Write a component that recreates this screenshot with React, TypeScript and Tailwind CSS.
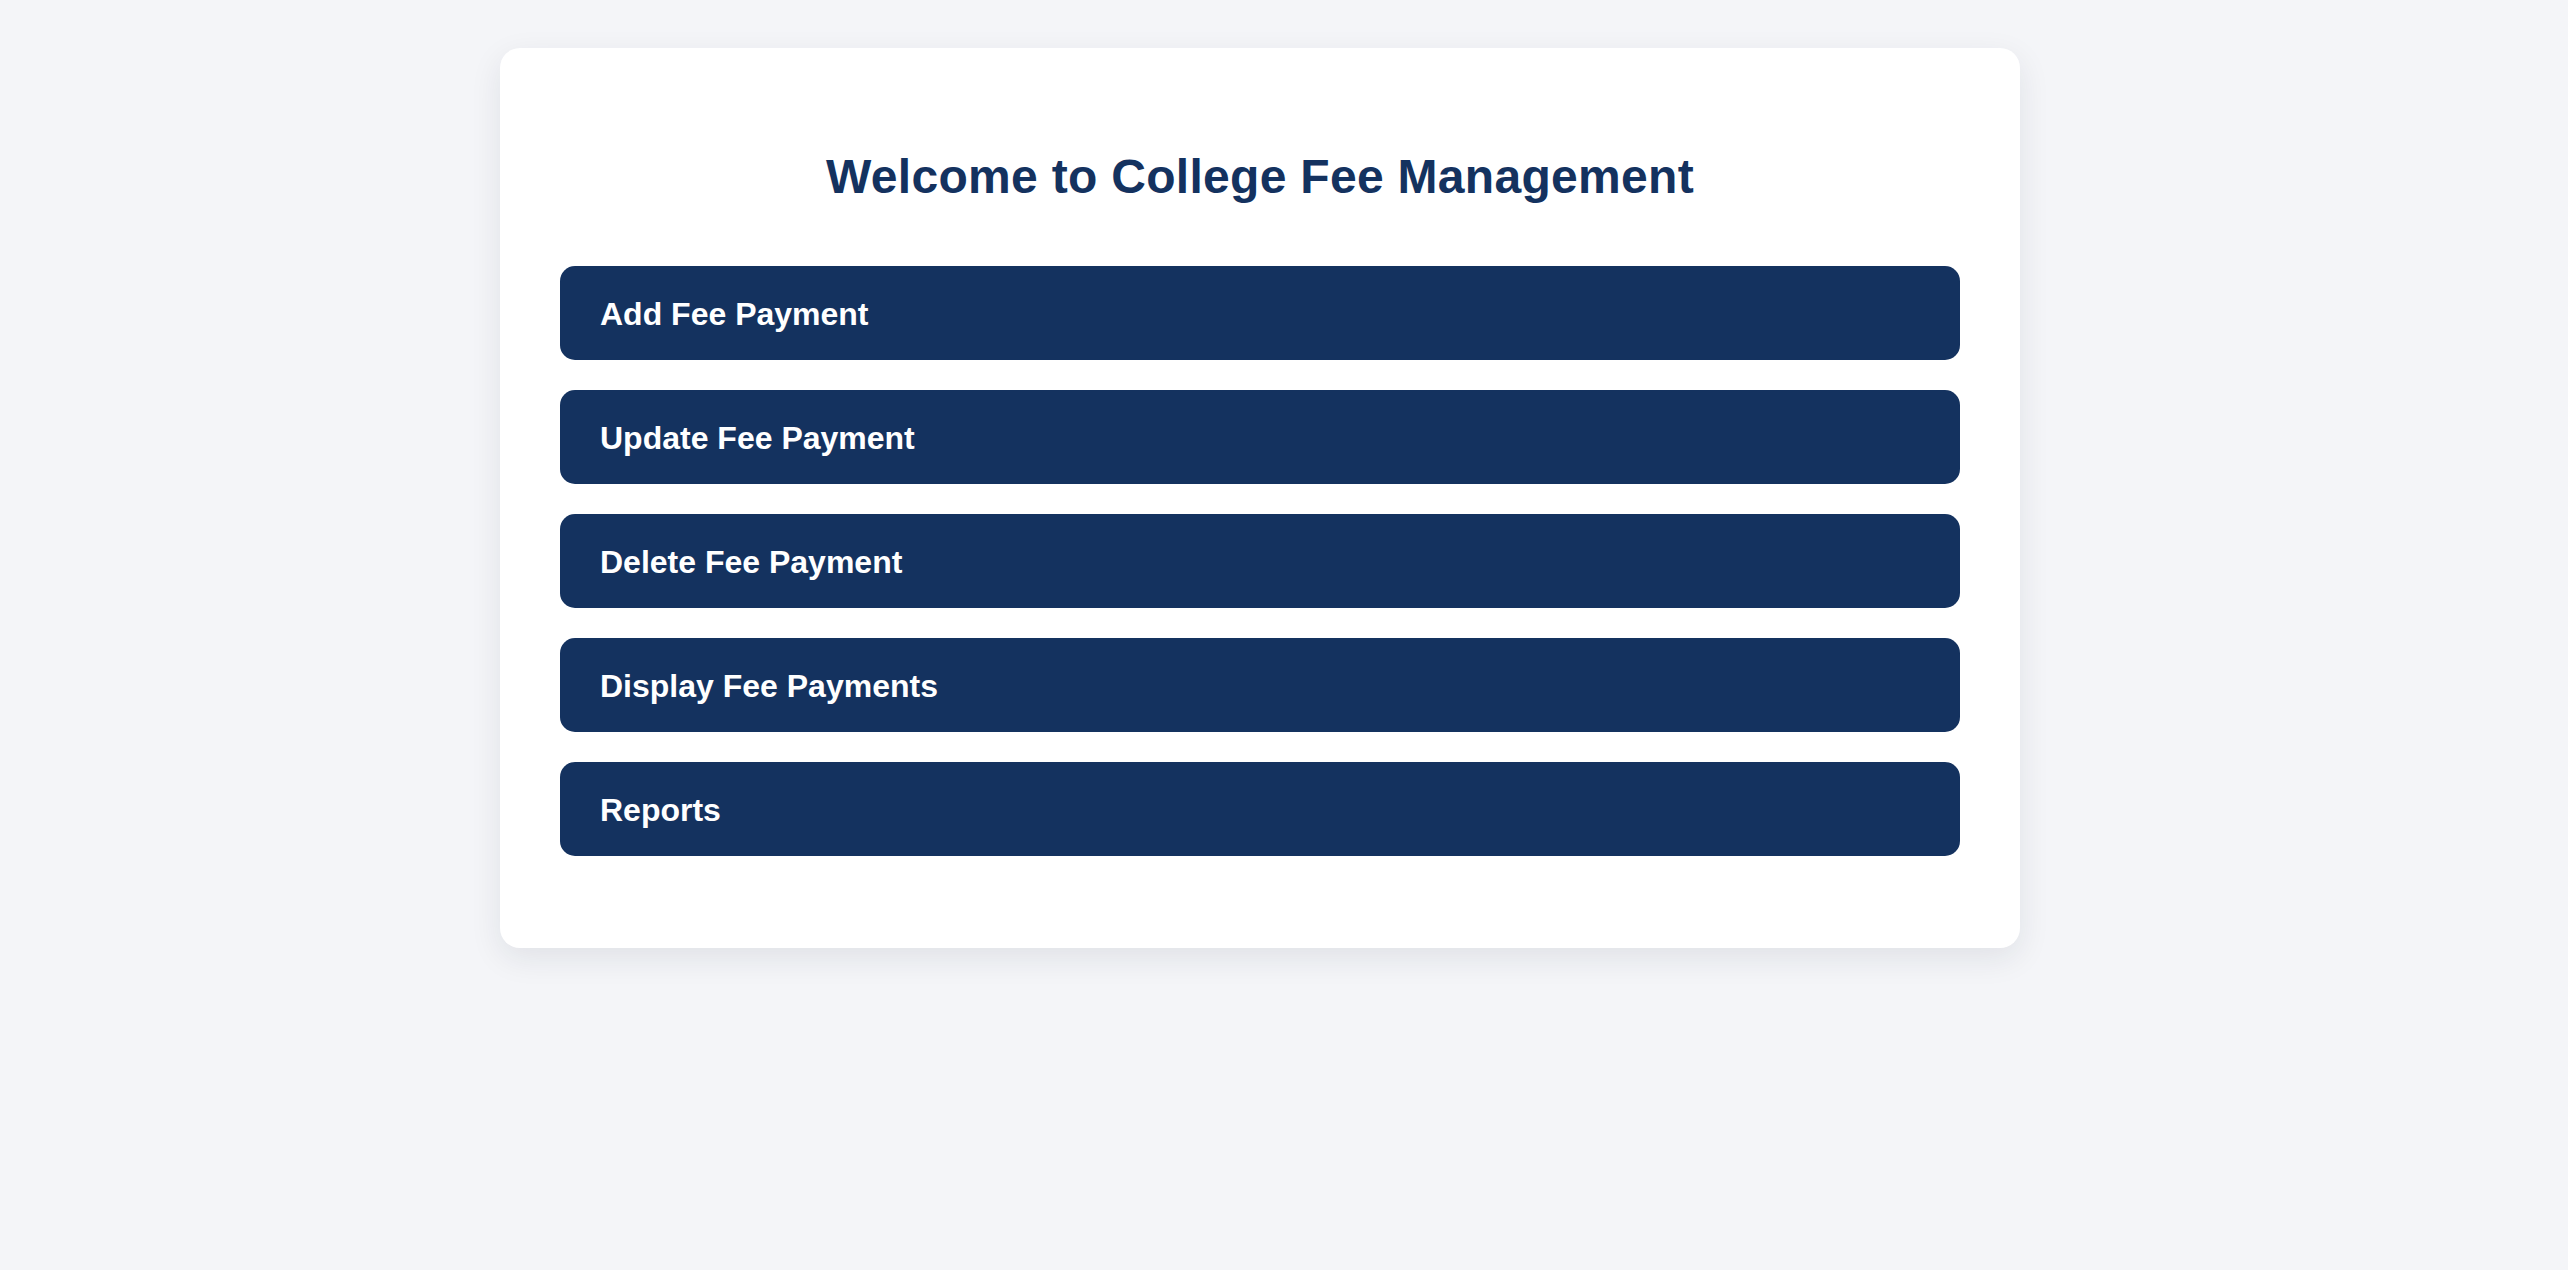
const menuItems = [
  'Add Fee Payment',
  'Update Fee Payment',
  'Delete Fee Payment',
  'Display Fee Payments',
  'Reports',
];

export default function App() {
  return (
    <div
      className="min-h-[1270px] w-full bg-[#f4f5f8] pt-[48px]"
      style={{ fontFamily: '"Liberation Sans", Arial, Helvetica, sans-serif' }}
    >
      <div className="ml-[500px] w-[1520px] rounded-[20px] bg-white px-[60px] pt-[100px] pb-[92px] shadow-[0_10px_32px_rgba(20,30,60,0.09)]">
        <h1 className="text-center text-[48px] leading-[58px] font-bold tracking-[0.3px] text-[#14325f]">
          Welcome to College Fee Management
        </h1>
        <div className="mt-[60px] flex flex-col gap-[30px]">
          {menuItems.map((label) => (
            <button
              key={label}
              className="flex h-[94px] w-full items-center rounded-[15px] bg-[#14325f] pt-[2px] pl-[40px] text-left text-[32px] leading-[37px] font-bold text-white"
            >
              {label}
            </button>
          ))}
        </div>
      </div>
    </div>
  );
}
